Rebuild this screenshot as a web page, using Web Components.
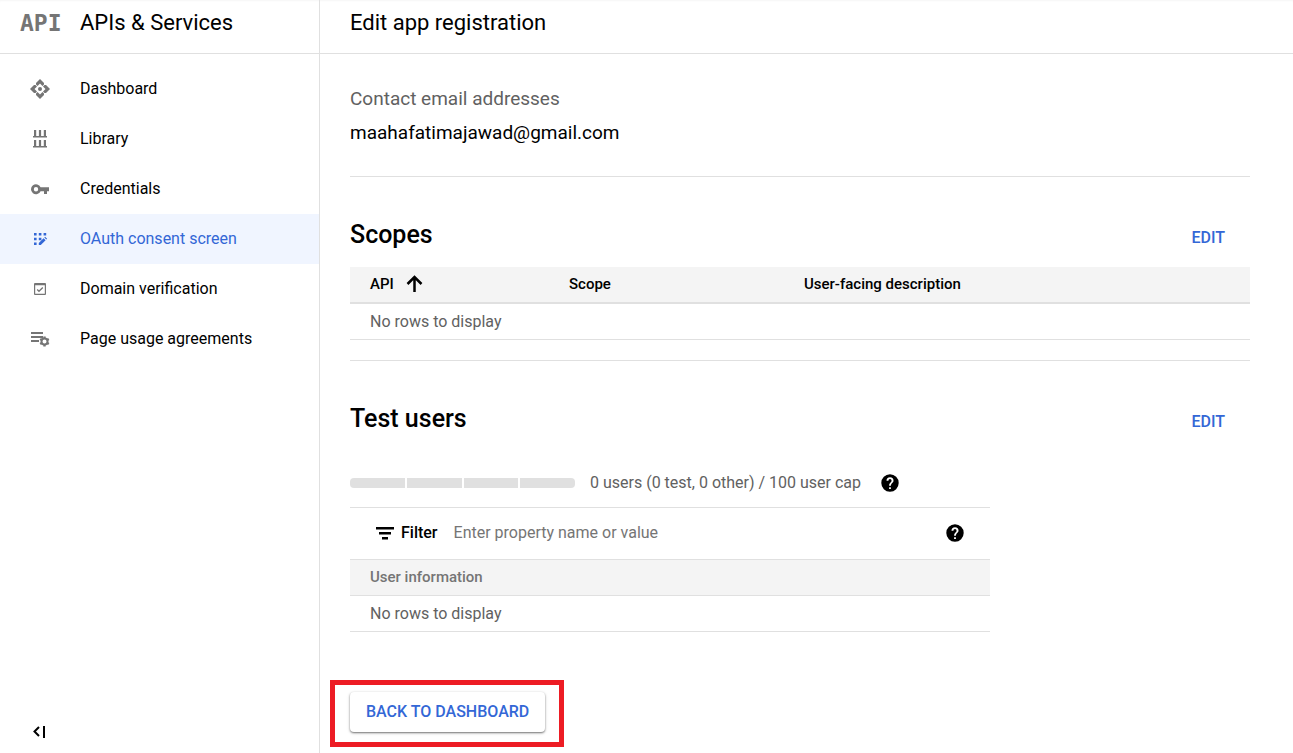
<!DOCTYPE html>
<html lang="en">
<head>
<meta charset="utf-8">
<meta name="viewport" content="width=device-width, initial-scale=1">
<title>Edit app registration</title>
<style>
  :root {
    --text: #000;
    --muted: #616161;
    --icon: #757575;
    --accent: #3367d6;
    --line: #e0e0e0;
    --head: #f4f4f4;
  }
  body {
    margin: 0;
    color: var(--text);
    background: #fff;
    font: 16px/24px Roboto, "Liberation Sans", sans-serif;
  }
</style>
</head>
<body>
<console-layout>
  <side-nav slot="nav" heading="APIs &amp; Services">
    <nav-item icon="dashboard">Dashboard</nav-item>
    <nav-item icon="library">Library</nav-item>
    <nav-item icon="key">Credentials</nav-item>
    <nav-item icon="consent" active>OAuth consent screen</nav-item>
    <nav-item icon="domain">Domain verification</nav-item>
    <nav-item icon="agreements">Page usage agreements</nav-item>
  </side-nav>
  <page-header>Edit app registration</page-header>
  <page-content>
    <info-field label="Contact email addresses">maahafatimajawad@gmail.com</info-field>
    <summary-section heading="Scopes">
      <scope-table></scope-table>
    </summary-section>
    <summary-section heading="Test users">
      <user-quota></user-quota>
      <user-table></user-table>
    </summary-section>
    <callout-box>
      <raised-button>Back to dashboard</raised-button>
    </callout-box>
  </page-content>
</console-layout>

<script>
const icons = {
  dashboard: `<g transform="translate(10 10)">
    <circle r="2"/>
    <path d="M0-10 4-6V-4.500L2.500-3 0-5.500-2.500-3-4-4.500V-6Z"/>
    <path transform="rotate(90)" d="M0-10 4-6V-4.500L2.500-3 0-5.500-2.500-3-4-4.500V-6Z"/>
    <path transform="rotate(180)" d="M0-10 4-6V-4.500L2.500-3 0-5.500-2.500-3-4-4.500V-6Z"/>
    <path transform="rotate(270)" d="M0-10 4-6V-4.500L2.500-3 0-5.500-2.500-3-4-4.500V-6Z"/>
  </g>`,
  library: `<path d="M4 1h2.200v6h2.700V1h2.200v6h2.700V1H16v6h1v1.500H3V7h1zM4 11h2.200v6h2.700v-6h2.200v6h2.700v-6H16v6h1v1.500H3V17h1z"/>`,
  key: `<path fill-rule="evenodd" d="M10.600 8.300a5 5 0 1 0 0 3.900H14V15h3v-2.800h2V8.300zM6 12.400a2.200 2.200 0 1 1 0-4.400 2.200 2.200 0 0 1 0 4.400z"/>`,
  consent: `<path d="M4 4h2.600v2.600H4zM8.800 4h2.600v2.600H8.800zM13.600 4h2.600v2.600h-2.600zM4 8.700h2.600v2.600H4zM8.800 8.700h2.600v2.600H8.800zM4 13.400h2.600V16H4zM8.800 14l4.800-4.800 2 2-4.800 4.800h-2zM14.300 8.500l.8-.8 2 2-.8.8z"/>`,
  domain: `<path fill-rule="evenodd" d="M5 4h10a1 1 0 0 1 1 1v10a1 1 0 0 1-1 1H5a1 1 0 0 1-1-1V5a1 1 0 0 1 1-1zm.2 2.200v8.600h9.600V6.200z"/><path d="M7.200 10.500 9 12.300 12.800 8.500" fill="none" stroke="currentColor" stroke-width="1.300"/>`,
  agreements: `<path d="M1 3h12v1.900H1zM1 7h12v1.900H1zM1 11h8v1.900H1z"/>
    <g transform="translate(14.500 12.500)"><circle r="3" fill="none" stroke="currentColor" stroke-width="2"/>
    <path fill="none" stroke="currentColor" stroke-width="2.400" d="M0-3V-5M0 3V5M2.600-1.500 4.300-2.500M2.600 1.500 4.300 2.500M-2.600-1.500-4.300-2.500M-2.600 1.500-4.300 2.500"/></g>`,
  collapse: `<path d="M9 6 4.500 10.500 9 15M14 5v12" fill="none" stroke="currentColor" stroke-width="2"/>`,
  sort: `<path d="M10.500 18V3M3.500 10l7-7 7 7" fill="none" stroke="currentColor" stroke-width="2.500"/>`,
  filter: `<path d="M1 4h18v2.500H1zM4 9h12v2.500H4zM7 14h6v2.500H7z"/>`,
  help: `<path fill-rule="evenodd" d="M10 1.300a8.700 8.700 0 1 0 0 17.400 8.700 8.700 0 0 0 0-17.400zM9.100 14.300h1.800v1.800H9.100zM6.500 7.700a3.500 3.500 0 0 1 7 0c0 2.200-2.600 2.400-2.600 5H9.100c0-3.100 2.500-3.400 2.500-5a1.600 1.600 0 0 0-3.200 0z"/>`
};

class BaseElement extends HTMLElement {
  constructor() {
    super();
    this.attachShadow({ mode: 'open' });
  }

  connectedCallback() {
    this.shadowRoot.innerHTML = `<style>
      *, :host { box-sizing: border-box; }
      button { font: inherit; color: inherit; border: 0; background: none; padding: 0; cursor: pointer; }
      </style>${this.render()}`;
  }
}

customElements.define(
  'app-icon',
  class extends BaseElement {
    render() {
      return `<style>
        :host { display: block; flex: none; width: 20px; height: 20px; }
        svg { display: block; fill: currentColor; }
        </style>
        <svg width="20" height="20" viewBox="0 0 20 20" aria-hidden="true">${icons[this.getAttribute('name')]}</svg>`;
    }
  }
);

customElements.define(
  'console-layout',
  class extends BaseElement {
    render() {
      return `<style>
        :host {
          display: grid;
          grid-template-columns: 320px minmax(0, 1fr);
          min-height: 100vh;
          box-shadow: inset 0 2px 2px -1px rgba(0, 0, 0, .04);
        }
        </style>
        <slot name="nav"></slot>
        <main><slot></slot></main>`;
    }
  }
);

customElements.define(
  'side-nav',
  class extends BaseElement {
    render() {
      return `<style>
        :host { display: flex; flex-direction: column; border-right: 1px solid var(--line); }
        header {
          display: flex;
          height: 54px;
          padding: 0 20px 8px;
          align-items: center;
          border-bottom: 1px solid var(--line);
        }
        .logo { width: 60px; color: var(--icon); font: bold 23px/24px "DejaVu Sans Mono", monospace; }
        h2 { margin: 0; font-size: 22px; line-height: 28px; font-weight: 400; }
        nav { flex: 1; padding-top: 10px; }
        button { align-self: flex-start; margin: 0 30px 12px; }
        </style>
        <header>
          <span class="logo">API</span>
          <h2>${this.getAttribute('heading').replace('&', '&amp;')}</h2>
        </header>
        <nav><slot></slot></nav>
        <button type="button" aria-label="Collapse menu"><app-icon name="collapse"></app-icon></button>`;
    }
  }
);

customElements.define(
  'nav-item',
  class extends BaseElement {
    render() {
      return `<style>
        :host { display: block; }
        a {
          display: flex;
          align-items: center;
          gap: 30px;
          height: 50px;
          padding-left: 30px;
          color: inherit;
          text-decoration: none;
        }
        app-icon { color: var(--icon); }
        :host([active]) a { background: #f0f5ff; }
        :host([active]) a, :host([active]) app-icon { color: var(--accent); }
        </style>
        <a href="#"><app-icon name="${this.getAttribute('icon')}"></app-icon><slot></slot></a>`;
    }
  }
);

customElements.define(
  'page-header',
  class extends BaseElement {
    render() {
      return `<style>
        :host {
          display: flex;
          height: 54px;
          padding: 0 30px 8px;
          align-items: center;
          border-bottom: 1px solid var(--line);
        }
        h1 { margin: 0; font-size: 22px; line-height: 28px; font-weight: 400; }
        </style>
        <h1><slot></slot></h1>`;
    }
  }
);

customElements.define(
  'page-content',
  class extends BaseElement {
    render() {
      return `<style>
        :host { display: block; padding: 32px 43px 6px 30px; }
        </style>
        <slot></slot>`;
    }
  }
);

customElements.define(
  'info-field',
  class extends BaseElement {
    render() {
      return `<style>
        :host { display: block; padding-bottom: 30px; border-bottom: 1px solid var(--line); }
        dl { margin: 0; font-size: 19px; line-height: 26px; }
        dt { color: var(--muted); margin-bottom: 8px; }
        dd { margin: 0; }
        </style>
        <dl><dt>${this.getAttribute('label')}</dt><dd><slot></slot></dd></dl>`;
    }
  }
);

customElements.define(
  'summary-section',
  class extends BaseElement {
    render() {
      return `<style>
        :host { display: block; }
        header {
          display: flex;
          justify-content: space-between;
          align-items: baseline;
          padding: 40px 25px 14px 0;
        }
        h2 { margin: 0; font-size: 25px; line-height: 36px; font-weight: 500; }
        button { color: var(--accent); font-weight: 500; text-transform: uppercase; }
        </style>
        <header>
          <h2>${this.getAttribute('heading')}</h2>
          <button type="button">Edit</button>
        </header>
        <slot></slot>`;
    }
  }
);

const tableStyle = `<style>
  table { width: 100%; border-collapse: separate; border-spacing: 0; table-layout: fixed; }
  th, td { height: 36px; padding: 0 20px; text-align: left; border-bottom: 1px solid var(--line); }
  th { padding-bottom: 2px; background: var(--head); font-size: 15px; font-weight: 500; line-height: 20px; }
  td { color: var(--muted); }
  </style>`;

customElements.define(
  'scope-table',
  class extends BaseElement {
    render() {
      return `${tableStyle}<style>
        :host { display: block; padding-bottom: 20px; border-bottom: 1px solid var(--line); }
        th { height: 37px; border-bottom-width: 2px; }
        .api { width: 199px; }
        .scope { width: 235px; }
        button { display: flex; align-items: center; gap: 10px; }
        </style>
        <table>
          <thead>
            <tr>
              <th class="api"><button type="button">API <app-icon name="sort"></app-icon></button></th>
              <th class="scope">Scope</th>
              <th>User-facing description</th>
            </tr>
          </thead>
          <tbody><tr><td colspan="3">No rows to display</td></tr></tbody>
        </table>`;
    }
  }
);

customElements.define(
  'user-quota',
  class extends BaseElement {
    render() {
      return `<style>
        :host { display: flex; align-items: center; padding: 20px 0 12px; color: var(--muted); }
        .bar {
          display: grid;
          grid-template-columns: repeat(4, 1fr);
          gap: 2px;
          width: 225px;
          height: 10px;
          margin-right: 15px;
          border-radius: 4px;
          overflow: hidden;
        }
        .bar i { background: var(--line); }
        button { margin-left: 19px; color: var(--text); }
        </style>
        <div class="bar"><i></i><i></i><i></i><i></i></div>
        <span>0 users (0 test, 0 other) / 100 user cap</span>
        <button type="button" aria-label="About the user cap"><app-icon name="help"></app-icon></button>`;
    }
  }
);

customElements.define(
  'user-table',
  class extends BaseElement {
    render() {
      return `${tableStyle}<style>
        :host { display: block; max-width: 640px; border-top: 1px solid var(--line); }
        .filter {
          display: flex;
          align-items: center;
          height: 52px;
          padding: 0 25px 2px;
          border-bottom: 1px solid var(--line);
        }
        label { padding: 0 16px 0 6px; font-weight: 500; }
        input {
          flex: 1;
          min-width: 0;
          padding: 0;
          border: 0;
          outline: 0;
          font: inherit;
        }
        input::placeholder { color: var(--icon); opacity: 1; }
        th { color: var(--icon); }
        </style>
        <div class="filter">
          <app-icon name="filter"></app-icon>
          <label for="filter">Filter</label>
          <input id="filter" type="text" placeholder="Enter property name or value">
          <button type="button" aria-label="Filter help"><app-icon name="help"></app-icon></button>
        </div>
        <table>
          <thead><tr><th>User information</th></tr></thead>
          <tbody><tr><td>No rows to display</td></tr></tbody>
        </table>`;
    }
  }
);

customElements.define(
  'callout-box',
  class extends BaseElement {
    render() {
      return `<style>
        :host {
          display: block;
          width: fit-content;
          margin: 48px 0 0 -20px;
          padding: 7px 14px 10px 15px;
          border: 5px solid #ed1c24;
        }
        </style>
        <slot></slot>`;
    }
  }
);

customElements.define(
  'raised-button',
  class extends BaseElement {
    render() {
      return `<style>
        :host { display: block; }
        button {
          display: block;
          height: 40px;
          padding: 0 16px;
          border-radius: 4px;
          background: #fff;
          color: var(--accent);
          font-weight: 500;
          text-transform: uppercase;
          box-shadow: 0 1px 2px rgba(0, 0, 0, .5), 0 1px 4px rgba(0, 0, 0, .1);
        }
        </style>
        <button type="button"><slot></slot></button>`;
    }
  }
);
</script>
</body>
</html>
